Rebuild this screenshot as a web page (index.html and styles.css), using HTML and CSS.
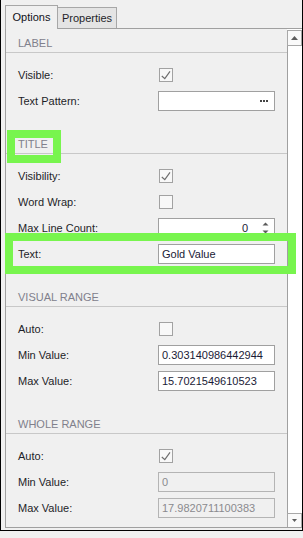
FILE: index.html
```html
<!DOCTYPE html>
<html lang="en">
<head>
    <meta charset="UTF-8">
    <title>Options</title>
    <link rel="stylesheet" href="styles.css">
</head>
<body>
    <div class="frame">
        <div class="tabstrip">
            <div class="tab active">Options</div>
            <div class="tab">Properties</div>
        </div>
        <div class="tabpage">
            <div class="props">
                <div class="group">
                    <div class="group-head">LABEL</div>
                    <div class="rows">
                        <div class="row">
                            <span class="lbl">Visible:</span>
                            <span class="check on"><svg width="12" height="12" viewBox="0 0 12 12"><path d="M1.8 7 L4.8 9.6 L10 2.4" /></svg></span>
                        </div>
                        <div class="row">
                            <span class="lbl">Text Pattern:</span>
                            <div class="edit">
                                <span class="val"></span>
                                <svg class="dots" width="8" height="2" viewBox="0 0 8 2"><rect x="0" y="0" width="2" height="2" /><rect x="3" y="0" width="2" height="2" /><rect x="6" y="0" width="2" height="2" /></svg>
                            </div>
                        </div>
                    </div>
                </div>

                <div class="group">
                    <div class="group-head">TITLE</div>
                    <div class="rows">
                        <div class="row">
                            <span class="lbl">Visibility:</span>
                            <span class="check on"><svg width="12" height="12" viewBox="0 0 12 12"><path d="M1.8 7 L4.8 9.6 L10 2.4" /></svg></span>
                        </div>
                        <div class="row">
                            <span class="lbl">Word Wrap:</span>
                            <span class="check"></span>
                        </div>
                        <div class="row">
                            <span class="lbl">Max Line Count:</span>
                            <div class="edit spin">
                                <span class="val">0</span>
                                <svg class="arrows" width="7" height="12" viewBox="0 0 7 12"><polygon points="0.5,3.5 3.5,0.5 6.5,3.5" /><polygon points="0.5,8.5 6.5,8.5 3.5,11.5" /></svg>
                            </div>
                        </div>
                        <div class="row">
                            <span class="lbl">Text:</span>
                            <div class="edit"><span class="val">Gold Value</span></div>
                        </div>
                    </div>
                </div>

                <div class="group">
                    <div class="group-head">VISUAL RANGE</div>
                    <div class="rows">
                        <div class="row">
                            <span class="lbl">Auto:</span>
                            <span class="check"></span>
                        </div>
                        <div class="row">
                            <span class="lbl">Min Value:</span>
                            <div class="edit"><span class="val">0.303140986442944</span></div>
                        </div>
                        <div class="row">
                            <span class="lbl">Max Value:</span>
                            <div class="edit"><span class="val">15.7021549610523</span></div>
                        </div>
                    </div>
                </div>

                <div class="group">
                    <div class="group-head">WHOLE RANGE</div>
                    <div class="rows">
                        <div class="row">
                            <span class="lbl">Auto:</span>
                            <span class="check on"><svg width="12" height="12" viewBox="0 0 12 12"><path d="M1.8 7 L4.8 9.6 L10 2.4" /></svg></span>
                        </div>
                        <div class="row">
                            <span class="lbl">Min Value:</span>
                            <div class="edit disabled"><span class="val">0</span></div>
                        </div>
                        <div class="row">
                            <span class="lbl">Max Value:</span>
                            <div class="edit disabled"><span class="val">17.9820711100383</span></div>
                        </div>
                    </div>
                </div>
            </div>

            <div class="vscroll">
                <div class="sb-btn up"><svg width="7" height="4" viewBox="0 0 7 4"><polygon points="0,4 3.5,0 7,4" /></svg></div>
                <div class="sb-track"></div>
                <div class="sb-btn down"><svg width="5" height="3" viewBox="0 0 5 3"><polygon points="0,0 5,0 2.5,3" /></svg></div>
            </div>
        </div>

        <!-- highlight annotations -->
        <div class="mark mark-title"></div>
        <div class="mark mark-text"></div>
    </div>
</body>
</html>
```

FILE: styles.css
```css
* { box-sizing: border-box; }
body {
    margin: 0;
    background-color: #f0f0f0;
    font-family: 'Liberation Sans', Arial, sans-serif;
    font-size: 11px;
    color: #1e1e28;
}
.frame {
    position: relative;
    width: 303px;
    height: 531px;
    background-color: #f0f0f0;
    border: 1px solid #000;
    border-top: none;
    display: flex;
    flex-direction: column;
}
.tabstrip {
    display: flex;
    align-items: flex-end;
    padding: 5px 0 0 4px;
}
.tab {
    border: 1px solid #a7a7a7;
    border-bottom: none;
    text-align: center;
    line-height: 14px;
}
.tab.active {
    position: relative;
    z-index: 1;
    width: 53px;
    height: 24px;
    margin-bottom: -1px;
    padding-top: 4px;
    background-color: #f0f0f0;
    color: #101018;
}
.tab:not(.active) {
    width: 60px;
    height: 21px;
    margin-left: -1px;
    padding-top: 3px;
    background-color: #e4e4e4;
}
.tabpage {
    flex: 1;
    display: flex;
    margin: 0 0 2px 4px;
    border-top: 1px solid #a0a0a0;
    border-left: 1px solid #a0a0a0;
    border-bottom: 1px solid #a0a0a0;
    overflow: hidden;
}
.props {
    flex: 1;
}
.group {
    padding-bottom: 16px;
}
.group-head {
    padding: 8px 0 3px 12px;
    line-height: 12px;
    color: #80808c;
    border-bottom: 1px solid #c8c8c8;
}
.rows {
    padding-top: 9px;
}
.row {
    display: grid;
    grid-template-columns: 140px 117px;
    align-items: center;
    height: 26px;
    padding-left: 12px;
}
.lbl {
    line-height: 14px;
}
.check {
    width: 14px;
    height: 14px;
    margin-left: 1px;
    border: 1px solid #a2a2a2;
    background-color: #f8f8f8;
    display: flex;
    align-items: center;
    justify-content: center;
}
.check svg path {
    fill: none;
    stroke: #6e6e6e;
    stroke-width: 1.2;
}
.edit {
    height: 20px;
    border: 1px solid #a0a0a0;
    background-color: #fff;
    display: flex;
    align-items: center;
    padding: 0 3px;
    color: #1a1a36;
}
.edit .val {
    flex: 1;
    line-height: 14px;
    white-space: nowrap;
}
.edit .dots {
    fill: #454545;
    margin-right: 3px;
}
.edit.spin .val {
    text-align: right;
    padding-right: 14px;
}
.edit .arrows {
    fill: #5a5a5a;
    margin-right: 2px;
}
.edit.disabled {
    background-color: #f0f0f0;
    border-color: #b4b4b4;
    color: #8a8a8e;
}
.vscroll {
    width: 15px;
    display: flex;
    flex-direction: column;
    background-color: #fff;
    padding-top: 1px;
}
.sb-btn {
    display: flex;
    align-items: center;
    justify-content: center;
    border: 1px solid #a8a8a8;
    background-color: #fafafa;
}
.sb-btn.up {
    height: 16px;
}
.sb-btn.down {
    height: 14px;
    border-bottom: none;
}
.sb-btn svg {
    fill: #5e5e5e;
}
.sb-track {
    flex: 1;
    border-left: 1px solid #a0a0a0;
}
.mark {
    position: absolute;
    border: 8px solid #78f54e;
}
.mark-title {
    left: 6px;
    top: 130px;
    width: 54px;
    height: 33px;
}
.mark-text {
    left: 4px;
    top: 233px;
    width: 291px;
    height: 41px;
}
```
